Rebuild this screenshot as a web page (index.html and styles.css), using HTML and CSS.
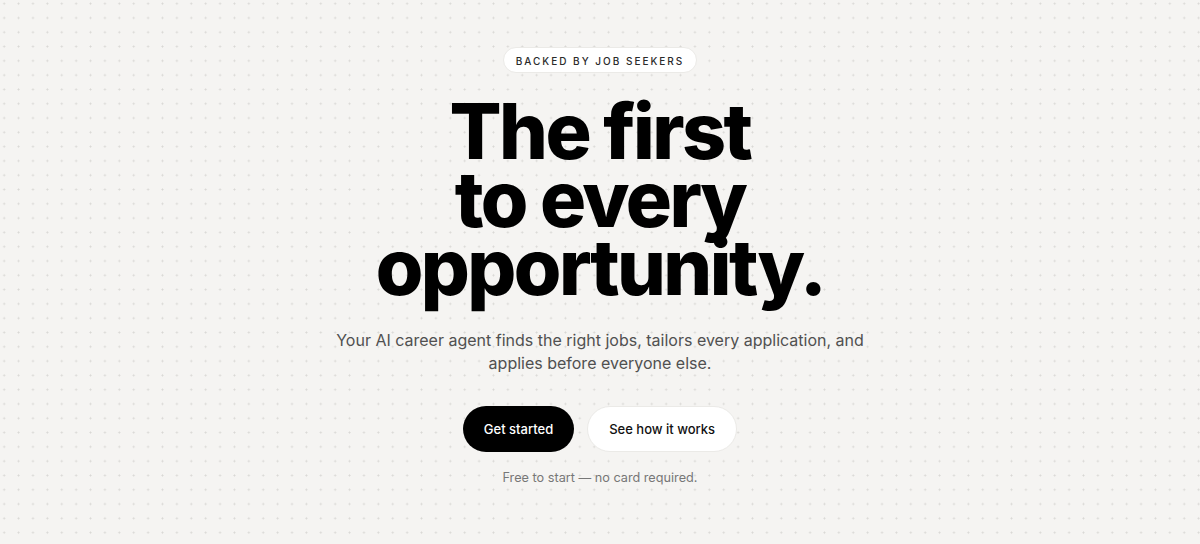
FILE: index.html
```html
<!DOCTYPE html>
<html lang="en">
<head>
  <meta charset="UTF-8">
  <meta name="viewport" content="width=device-width, initial-scale=1.0">
  <title>The first to every opportunity</title>
  <link rel="stylesheet" href="styles.css">
</head>
<body>
  <main class="hero">
    <span class="badge">Backed by job seekers</span>
    <h1 class="headline">The first<br>to every<br>opportunity.</h1>
    <p class="lead">Your AI career agent finds the right jobs, tailors every application, and applies before everyone else.</p>
    <div class="actions">
      <a class="btn btn-dark" href="#">Get started</a>
      <a class="btn btn-light" href="#">See how it works</a>
    </div>
    <p class="note">Free to start — no card required.</p>
  </main>
</body>
</html>
```

FILE: styles.css
```css
body {
  margin: 0;
  min-height: 100vh;
  font-family: Inter, "Noto Sans", sans-serif;
  color: #000;
  background-color: #f5f4f2;
  background-image: radial-gradient(circle, #d8d7d4 0.8px, transparent 1.2px);
  background-size: 14.4px 14.3px;
  background-position: -3px -3.5px;
}
.hero {
  display: flex;
  flex-direction: column;
  align-items: center;
  text-align: center;
  padding-top: 47px;
}
.badge {
  display: inline-block;
  padding: 0 12px;
  height: 26px;
  line-height: 26px;
  background: #fff;
  border: 1px solid #ebeae7;
  border-radius: 999px;
  font-size: 10px;
  font-weight: 500;
  letter-spacing: 2px;
  text-transform: uppercase;
  color: #2a2a2a;
  box-sizing: border-box;
}
.headline {
  margin: 20px 0 0;
  padding-top: 4px;
  font-size: 77px;
  font-weight: 800;
  line-height: 68px;
  letter-spacing: -2.6px;
}
.lead {
  margin: 28px 0 0;
  max-width: 540px;
  font-size: 16px;
  line-height: 23px;
  color: #505050;
}
.actions {
  display: flex;
  gap: 13px;
  margin-top: 31px;
}
.btn {
  display: inline-flex;
  align-items: center;
  height: 46px;
  padding: 0 21px;
  border-radius: 999px;
  font-size: 13px;
  font-weight: 500;
  text-decoration: none;
  box-sizing: border-box;
}
.btn-dark {
  background: #000;
  color: #fff;
}
.btn-light {
  background: #fff;
  color: #111;
  border: 1px solid #ebeae7;
}
.note {
  margin: 18px 0 0;
  font-size: 12.7px;
  color: #777;
}
```
